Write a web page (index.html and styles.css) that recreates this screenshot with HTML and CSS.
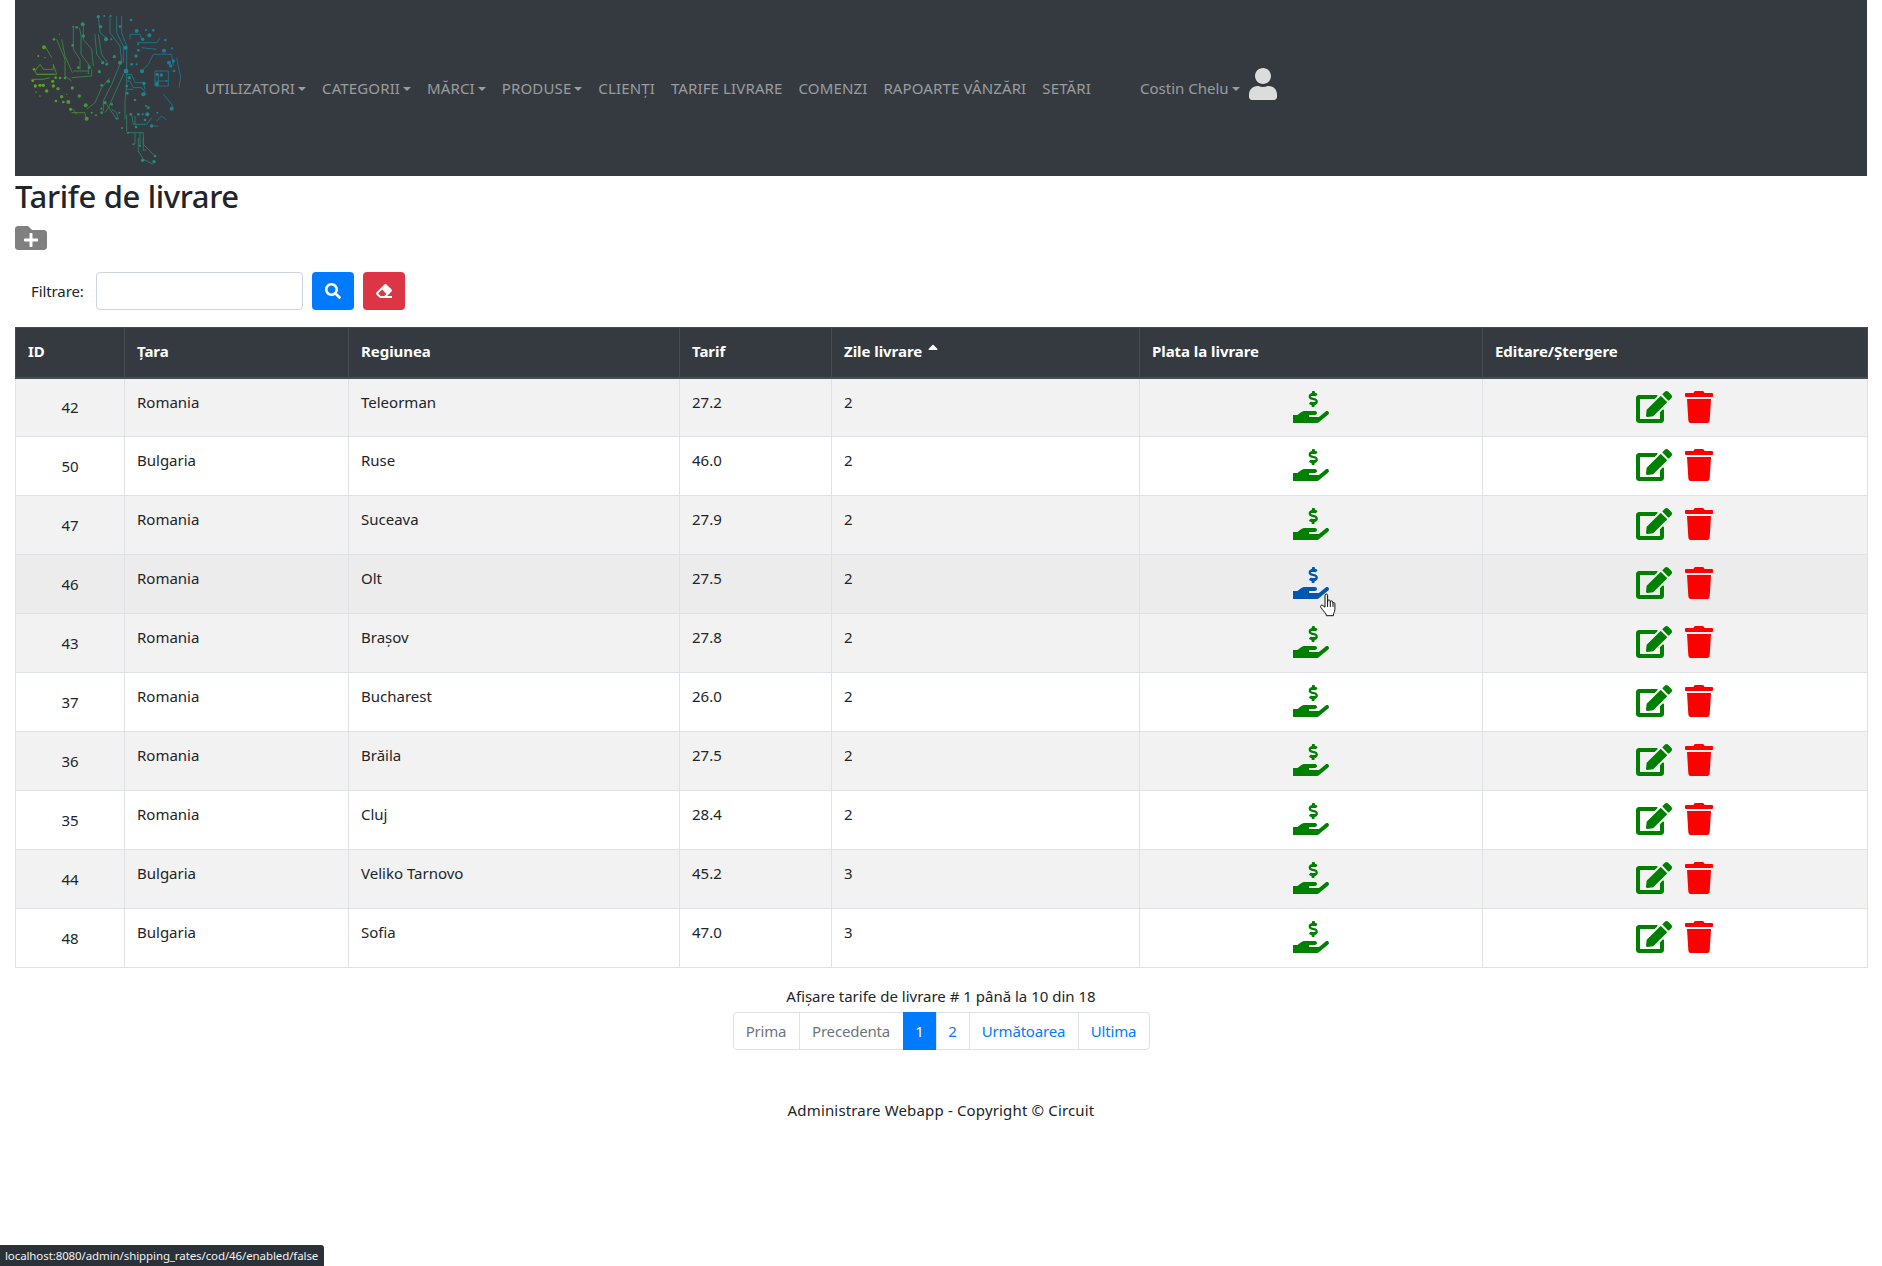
FILE: index.html
```html
<!DOCTYPE html>
<html lang="ro">
<head>
<meta charset="utf-8">
<title>Tarife de livrare</title>
<link rel="stylesheet" href="styles.css">
</head>
<body>
<svg class="defs" width="0" height="0" aria-hidden="true">
  <defs>
    <symbol id="i-cod" viewBox="0 0 576 512"><path d="M296 138l52 14c8 2 13 7 13 13 0 6-6 11-13 11h-34c-6 0-11-1-16-3-7-3-14-2-19 3l-18 17c-6 6-5 15 2 19 10 7 22 11 34 13v15c0 9 8 16 17 16h15c9 0 17-7 17-16v-16c31-4 55-31 51-62-3-22-22-40-45-46l-52-14c-8-2-13-7-13-13 0-6 6-11 13-11h34c6 0 11 1 16 3 7 3 14 2 19-3l18-17c6-6 5-15-2-19-10-7-22-11-34-13V16c0-9-8-16-17-16h-15c-9 0-17 7-17 16v16c-31 4-55 31-51 62 3 22 22 38 45 44z"/><path d="M565.3 328.1c-11.8-10.7-30.2-10-42.6 0L430.3 402c-11.3 9.1-25.4 14-40 14H272c-8.8 0-16-7.2-16-16s7.2-16 16-16h78.3c15.9 0 30.7-10.9 33.3-26.6 3.3-20-12.1-37.4-31.6-37.4H192c-27 0-53.1 9.3-74.1 26.3L71.4 384H0v128h372.8c14.5 0 28.6-4.9 40-14l151.2-121c15.2-12.2 16.4-34.8 1.3-48.9z"/></symbol>
    <symbol id="i-edit" viewBox="0 0 576 512"><path d="M402.6 83.2l90.2 90.2c3.8 3.8 3.8 10 0 13.8L274.4 405.6l-92.8 10.3c-12.4 1.4-22.9-9.1-21.5-21.5l10.3-92.8L388.8 83.2c3.8-3.8 10-3.8 13.8 0zm162-22.9l-48.8-48.8c-15.2-15.2-39.9-15.2-55.2 0l-35.4 35.4c-3.8 3.8-3.8 10 0 13.8l90.2 90.2c3.8 3.8 10 3.8 13.8 0l35.4-35.4c15.2-15.3 15.2-40 0-55.2zM384 346.2V448H64V128h229.8c3.2 0 6.2-1.3 8.5-3.5l40-40c7.6-7.6 2.2-20.5-8.5-20.5H48C21.5 64 0 85.5 0 112v352c0 26.5 21.5 48 48 48h352c26.5 0 48-21.5 48-48V306.2c0-10.7-12.9-16-20.5-8.5l-40 40c-2.2 2.3-3.5 5.3-3.5 8.5z"/></symbol>
    <symbol id="i-trash" viewBox="0 0 448 512"><path d="M432 32H312l-9.4-18.7A24 24 0 0 0 281.1 0H166.8a23.72 23.72 0 0 0-21.4 13.3L136 32H16A16 16 0 0 0 0 48v32a16 16 0 0 0 16 16h416a16 16 0 0 0 16-16V48a16 16 0 0 0-16-16zM53.2 467a48 48 0 0 0 47.9 45h245.8a48 48 0 0 0 47.9-45L416 128H32z"/></symbol>
  </defs>
</svg>

<div class="page">
  <nav class="navbar">
    <svg class="logo" viewBox="0 0 540 495" aria-label="logo">
      <defs>
        <linearGradient id="brain" gradientUnits="userSpaceOnUse" x1="40" y1="300" x2="480" y2="120">
          <stop offset="0" stop-color="#63ad0c"/>
          <stop offset=".35" stop-color="#3f9040"/>
          <stop offset=".6" stop-color="#1f8a86"/>
          <stop offset="1" stop-color="#1877a3"/>
        </linearGradient>
      </defs>
      <g class="traces">
        <path d="M160 60v70l20 30v30M178 65l5 20v60l30 40M190 60v40l25 30 5 50M110 100l25 60v50l20 15M125 100l10 50 22 50"/>
        <path d="M235 30l5 50 25 20M235 85l10 60 20 30M225 85l5 60 20 25M270 30v50l30 40 5 50M290 30v50l20 40v50M305 30v50l15 40"/>
        <path d="M45 195l15-20 10 15h30v-15l10 30H50zM50 205h55M40 220h30l20-5M75 120l20 35"/>
        <path d="M320 125v115l-5 40v60M315 195l-50 110-10 15M270 215l-25 30-20 45-25 20M300 175l-25 60-25 50v30"/>
        <path d="M320 205h15l10 25h25l5 20M320 225h10l10 20h25l15 20M320 250h20"/>
        <path d="M365 195l20-20 15-30h55l5 35M350 110h60l10-15M330 100v-15h30l5 15M365 125l45 5"/>
        <path d="M405 195h40v45h-40zM415 205v25M405 225h35M430 265l25 30 5 15M470 155l12 60-5 30"/>
        <path d="M155 320h40l5 25M160 310l10 15M275 310l15 10 5 20M260 295l30 45"/>
        <path d="M320 325v50M335 325l5 30h40l15-20M345 355v-25M395 360h20M410 345l15-15 15 12"/>
        <path d="M320 380h50v35l35 35M345 380v35M360 380v40M370 395v40M355 395v40l15 25 30 15"/>
        <path d="M155 215l60-5v-20M160 195h45M205 175v30"/>
      </g>
      <g class="dots">
        <circle cx="72" cy="124" r="6"/><circle cx="102" cy="100" r="4"/><circle cx="118" cy="85" r="2"/><circle cx="55" cy="150" r="3"/><circle cx="75" cy="155" r="2"/>
        <circle cx="42" cy="190" r="4"/><circle cx="38" cy="224" r="4"/><circle cx="46" cy="240" r="5"/><circle cx="60" cy="238" r="5"/><circle cx="70" cy="238" r="5"/><circle cx="80" cy="255" r="5"/><circle cx="60" cy="270" r="2"/><circle cx="48" cy="258" r="2"/>
        <circle cx="98" cy="226" r="5"/><circle cx="100" cy="240" r="5"/><circle cx="114" cy="248" r="5"/><circle cx="120" cy="216" r="4"/><circle cx="135" cy="216" r="4"/><circle cx="107" cy="215" r="4"/>
        <circle cx="125" cy="272" r="5"/><circle cx="108" cy="285" r="4"/><circle cx="130" cy="288" r="4"/><circle cx="145" cy="288" r="6"/><circle cx="157" cy="246" r="5"/><circle cx="178" cy="270" r="5"/><circle cx="140" cy="265" r="2"/>
        <circle cx="152" cy="310" r="5"/><circle cx="200" cy="338" r="6"/><circle cx="228" cy="328" r="3"/><circle cx="197" cy="298" r="6"/><circle cx="215" cy="320" r="3"/><circle cx="245" cy="320" r="4"/>
        <circle cx="255" cy="290" r="5"/><circle cx="244" cy="308" r="3"/><circle cx="275" cy="295" r="4"/><circle cx="298" cy="320" r="3"/><circle cx="290" cy="338" r="3"/><circle cx="306" cy="366" r="3"/>
        <circle cx="238" cy="197" r="5"/><circle cx="248" cy="170" r="5"/><circle cx="265" cy="226" r="5"/><circle cx="245" cy="238" r="4"/><circle cx="283" cy="152" r="5"/><circle cx="300" cy="170" r="6"/><circle cx="260" cy="175" r="4"/>
        <circle cx="160" cy="62" r="3"/><circle cx="170" cy="64" r="4"/><circle cx="188" cy="55" r="6"/><circle cx="190" cy="90" r="5"/><circle cx="158" cy="118" r="4"/><circle cx="175" cy="185" r="4"/><circle cx="208" cy="185" r="4"/>
        <circle cx="235" cy="32" r="5"/><circle cx="253" cy="30" r="3"/><circle cx="272" cy="30" r="3"/><circle cx="242" cy="62" r="5"/><circle cx="258" cy="100" r="6"/><circle cx="300" cy="62" r="4"/><circle cx="333" cy="42" r="4"/><circle cx="274" cy="100" r="3"/>
        <circle cx="350" cy="75" r="6"/><circle cx="378" cy="72" r="3"/><circle cx="400" cy="73" r="4"/><circle cx="388" cy="88" r="6"/><circle cx="368" cy="100" r="5"/><circle cx="436" cy="102" r="4"/><circle cx="317" cy="125" r="6"/><circle cx="355" cy="115" r="3"/><circle cx="355" cy="133" r="4"/><circle cx="348" cy="150" r="5"/><circle cx="432" cy="134" r="6"/><circle cx="456" cy="127" r="3"/>
        <circle cx="447" cy="170" r="6"/><circle cx="460" cy="165" r="5"/><circle cx="452" cy="180" r="5"/><circle cx="462" cy="195" r="4"/><circle cx="366" cy="196" r="6"/><circle cx="318" cy="195" r="7"/><circle cx="335" cy="175" r="4"/><circle cx="350" cy="175" r="3"/>
        <circle cx="412" cy="205" r="5"/><circle cx="424" cy="207" r="5"/><circle cx="411" cy="234" r="6"/><circle cx="440" cy="225" r="3"/><circle cx="372" cy="232" r="5"/><circle cx="370" cy="265" r="6"/><circle cx="328" cy="215" r="5"/><circle cx="320" cy="240" r="4"/><circle cx="322" cy="262" r="4"/>
        <circle cx="345" cy="282" r="4"/><circle cx="378" cy="300" r="3"/><circle cx="455" cy="308" r="6"/><circle cx="382" cy="325" r="6"/><circle cx="355" cy="325" r="4"/><circle cx="368" cy="325" r="3"/><circle cx="412" cy="320" r="3"/><circle cx="395" cy="360" r="5"/><circle cx="348" cy="363" r="4"/><circle cx="375" cy="342" r="4"/><circle cx="332" cy="325" r="4"/><circle cx="385" cy="305" r="4"/>
        <circle cx="324" cy="380" r="3"/><circle cx="340" cy="415" r="3"/><circle cx="360" cy="420" r="3"/><circle cx="368" cy="463" r="5"/><circle cx="402" cy="467" r="5"/><circle cx="405" cy="450" r="4"/><circle cx="375" cy="432" r="2"/>
      </g>
    </svg>
    <ul class="nav-list">
      <li><a class="nav-link caret" href="#">UTILIZATORI</a></li>
      <li><a class="nav-link caret" href="#">CATEGORII</a></li>
      <li><a class="nav-link caret" href="#">MĂRCI</a></li>
      <li><a class="nav-link caret" href="#">PRODUSE</a></li>
      <li><a class="nav-link" href="#">CLIENȚI</a></li>
      <li><a class="nav-link" href="#">TARIFE LIVRARE</a></li>
      <li><a class="nav-link" href="#">COMENZI</a></li>
      <li><a class="nav-link" href="#">RAPOARTE VÂNZĂRI</a></li>
      <li><a class="nav-link" href="#">SETĂRI</a></li>
    </ul>
    <div class="account">
      <a class="nav-link caret account-name" href="#">Costin Chelu</a>
      <svg class="user-icon" viewBox="0 0 448 512"><path d="M224 256c70.700 0 128-57.300 128-128S294.700 0 224 0 96 57.300 96 128s57.300 128 128 128zm89.600 32h-16.700c-22.200 10.200-46.900 16-72.900 16s-50.600-5.800-72.900-16h-16.700C60.200 288 0 348.200 0 422.400V464c0 26.500 21.500 48 48 48h352c26.500 0 48-21.500 48-48v-41.600c0-74.200-60.200-134.400-134.400-134.400z"/></svg>
    </div>
  </nav>

  <h2 class="title">Tarife de livrare</h2>
  <a class="add-link" href="#"><svg class="add-icon" viewBox="0 0 512 512"><path d="M464 128H272l-64-64H48C21.490 64 0 85.490 0 112v288c0 26.510 21.490 48 48 48h416c26.510 0 48-21.490 48-48V176c0-26.510-21.490-48-48-48zm-96 168c0 8.840-7.160 16-16 16h-72v72c0 8.840-7.160 16-16 16h-16c-8.840 0-16-7.160-16-16v-72h-72c-8.840 0-16-7.160-16-16v-16c0-8.840 7.160-16 16-16h72v-72c0-8.840 7.160-16 16-16h16c8.840 0 16 7.160 16 16v72h72c8.840 0 16 7.160 16 16v16z"/></svg></a>

  <form class="filter">
    <label class="filter-label" for="kw">Filtrare:</label>
    <input class="filter-input" id="kw" type="text">
    <button class="btn btn-blue" type="button"><svg class="btn-icon" viewBox="0 0 512 512"><path d="M505 442.700L405.300 343c-4.500-4.500-10.600-7-17-7H372c27.600-35.300 44-79.700 44-128C416 93.100 322.900 0 208 0S0 93.100 0 208s93.100 208 208 208c48.300 0 92.700-16.400 128-44v16.300c0 6.400 2.500 12.500 7 17l99.700 99.700c9.400 9.400 24.600 9.400 33.900 0l28.300-28.300c9.400-9.400 9.400-24.600.1-34zM208 336c-70.700 0-128-57.200-128-128 0-70.700 57.200-128 128-128 70.700 0 128 57.200 128 128 0 70.700-57.200 128-128 128z"/></svg></button>
    <button class="btn btn-red" type="button"><svg class="btn-icon" viewBox="0 0 512 512"><path d="M497.941 273.941c18.745-18.745 18.745-49.137 0-67.882l-160-160c-18.745-18.745-49.136-18.746-67.883 0l-256 256c-18.745 18.745-18.745 49.137 0 67.882l96 96A48.004 48.004 0 0 0 144 480h356c6.627 0 12-5.373 12-12v-40c0-6.627-5.373-12-12-12H355.883l142.058-142.059zm-302.627-62.627l137.373 137.373L265.373 416H150.628l-80-80 124.686-124.686z"/></svg></button>
  </form>

  <table class="rates">
    <colgroup>
      <col class="c-id"><col class="c-country"><col class="c-region"><col class="c-rate"><col class="c-days"><col class="c-cod"><col class="c-actions">
    </colgroup>
    <thead>
      <tr>
        <th>ID</th><th>Țara</th><th>Regiunea</th><th>Tarif</th>
        <th>Zile livrare <svg class="sort-up" viewBox="0 0 320 512"><path d="M279 224H41c-21.400 0-32.100-25.900-17-41L143 64c9.400-9.400 24.600-9.400 33.900 0l119 119c15.200 15.100 4.500 41-16.900 41z"/></svg></th>
        <th>Plata la livrare</th><th>Editare/Ștergere</th>
      </tr>
    </thead>
    <tbody>
      <tr><td class="id">42</td><td>Romania</td><td>Teleorman</td><td>27.2</td><td>2</td><td class="center"><svg class="ico cod"><use href="#i-cod"/></svg></td><td class="center actions"><svg class="ico edit"><use href="#i-edit"/></svg><svg class="ico trash"><use href="#i-trash"/></svg></td></tr>
      <tr><td class="id">50</td><td>Bulgaria</td><td>Ruse</td><td>46.0</td><td>2</td><td class="center"><svg class="ico cod"><use href="#i-cod"/></svg></td><td class="center actions"><svg class="ico edit"><use href="#i-edit"/></svg><svg class="ico trash"><use href="#i-trash"/></svg></td></tr>
      <tr><td class="id">47</td><td>Romania</td><td>Suceava</td><td>27.9</td><td>2</td><td class="center"><svg class="ico cod"><use href="#i-cod"/></svg></td><td class="center actions"><svg class="ico edit"><use href="#i-edit"/></svg><svg class="ico trash"><use href="#i-trash"/></svg></td></tr>
      <tr class="hover"><td class="id">46</td><td>Romania</td><td>Olt</td><td>27.5</td><td>2</td><td class="center"><span class="cursor-anchor"><svg class="ico cod active"><use href="#i-cod"/></svg><svg class="hand-cursor" viewBox="0 0 18 24"><path d="M6 2.200c0-1.600 2.600-1.600 2.600 0v7l.1-1.400c.3-1.300 2.400-1.200 2.500.3l.1 1.500.1-.9c.3-1.200 2.200-1 2.300.4l.1 1.100c.2-1 2-.9 2.100.5v5.600c0 1.600-.6 3-1.300 4.200l-.2 2.200H7.400l-.4-1.700C5.800 19.600 3.800 17 1.800 14.400c-1-1.400.7-3 2.100-1.900L6 14.200z"/><path class="cursor-lines" d="M8.600 9v5M11.300 9.500V14M14 10v4"/></svg></span></td><td class="center actions"><svg class="ico edit"><use href="#i-edit"/></svg><svg class="ico trash"><use href="#i-trash"/></svg></td></tr>
      <tr><td class="id">43</td><td>Romania</td><td>Brașov</td><td>27.8</td><td>2</td><td class="center"><svg class="ico cod"><use href="#i-cod"/></svg></td><td class="center actions"><svg class="ico edit"><use href="#i-edit"/></svg><svg class="ico trash"><use href="#i-trash"/></svg></td></tr>
      <tr><td class="id">37</td><td>Romania</td><td>Bucharest</td><td>26.0</td><td>2</td><td class="center"><svg class="ico cod"><use href="#i-cod"/></svg></td><td class="center actions"><svg class="ico edit"><use href="#i-edit"/></svg><svg class="ico trash"><use href="#i-trash"/></svg></td></tr>
      <tr><td class="id">36</td><td>Romania</td><td>Brăila</td><td>27.5</td><td>2</td><td class="center"><svg class="ico cod"><use href="#i-cod"/></svg></td><td class="center actions"><svg class="ico edit"><use href="#i-edit"/></svg><svg class="ico trash"><use href="#i-trash"/></svg></td></tr>
      <tr><td class="id">35</td><td>Romania</td><td>Cluj</td><td>28.4</td><td>2</td><td class="center"><svg class="ico cod"><use href="#i-cod"/></svg></td><td class="center actions"><svg class="ico edit"><use href="#i-edit"/></svg><svg class="ico trash"><use href="#i-trash"/></svg></td></tr>
      <tr><td class="id">44</td><td>Bulgaria</td><td>Veliko Tarnovo</td><td>45.2</td><td>3</td><td class="center"><svg class="ico cod"><use href="#i-cod"/></svg></td><td class="center actions"><svg class="ico edit"><use href="#i-edit"/></svg><svg class="ico trash"><use href="#i-trash"/></svg></td></tr>
      <tr><td class="id">48</td><td>Bulgaria</td><td>Sofia</td><td>47.0</td><td>3</td><td class="center"><svg class="ico cod"><use href="#i-cod"/></svg></td><td class="center actions"><svg class="ico edit"><use href="#i-edit"/></svg><svg class="ico trash"><use href="#i-trash"/></svg></td></tr>
    </tbody>
  </table>

  <div class="summary">Afișare tarife de livrare # 1 până la 10 din 18</div>
  <ul class="pagination">
    <li class="page-item w-prima disabled">Prima</li>
    <li class="page-item w-prev disabled">Precedenta</li>
    <li class="page-item w-num current">1</li>
    <li class="page-item w-num">2</li>
    <li class="page-item w-next">Următoarea</li>
    <li class="page-item w-last">Ultima</li>
  </ul>
  <footer class="footer">Administrare Webapp - Copyright © Circuit</footer>
</div>
<div class="status-bar">localhost:8080/admin/shipping_rates/cod/46/enabled/false</div>
</body>
</html>
```
FILE: styles.css
```css
* { box-sizing: border-box; }
html, body { margin: 0; padding: 0; }
body {
  font-family: "Noto Sans", "Open Sans", sans-serif;
  font-size: 15px;
  line-height: 24px;
  color: #212529;
  background: #fff;
  height: 1266px;
  overflow: hidden;
}
.defs { display: block; height: 0; }
.page { padding: 0 15px; }

.navbar {
  display: flex;
  align-items: center;
  height: 176px;
  background: #343a40;
  padding-left: 5px;
}
.logo { width: 180px; height: 165px; flex: none; }
.traces { fill: none; stroke: url(#brain); stroke-width: 2.5; opacity: .9; }
.dots { fill: url(#brain); }
.nav-list {
  list-style: none;
  display: flex;
  margin: 0 0 0 5px;
  padding: 0;
  gap: 16px;
}
.nav-link {
  color: rgba(255,255,255,.5);
  text-decoration: none;
  font-size: 15px;
  letter-spacing: .13px;
  white-space: nowrap;
}
.caret::after {
  content: "";
  display: inline-block;
  margin-left: 3px;
  vertical-align: 3px;
  border-top: 4px solid;
  border-left: 4px solid transparent;
  border-right: 4px solid transparent;
}
.account { display: flex; align-items: center; margin-left: 49px; }
.account-name { letter-spacing: 0; }
.user-icon { width: 28px; height: 32px; fill: #dcdcdc; margin: -8px 0 0 9px; }

.title {
  margin: -1px 0 0;
  font-size: 31px;
  line-height: 42px;
  font-weight: 500;
  letter-spacing: -.35px;
}
.add-link { display: block; height: 38px; }
.add-icon { display: block; width: 32px; height: 32px; fill: #808080; margin-top: 5px; }

.filter { display: flex; align-items: center; height: 38px; padding-left: 16px; margin-top: 12px; }
.filter-label { font-size: 15px; width: 65px; letter-spacing: -.1px; }
.filter-input {
  width: 207px; height: 38px;
  border: 1px solid #ced4da; border-radius: 4px;
  margin-right: 9px;
}
.btn {
  width: 42px; height: 38px; border: 0; border-radius: 4px;
  display: flex; align-items: center; justify-content: center;
  margin-right: 9px; padding: 0;
}
.btn-blue { background: #007bff; }
.btn-red { background: #dc3545; }
.btn-icon { width: 16px; height: 16px; fill: #fff; }

.rates {
  width: 1852px;
  margin-top: 17px;
  border-collapse: collapse;
  table-layout: fixed;
}
.c-id { width: 109px; }
.c-country { width: 224px; }
.c-region { width: 331px; }
.c-rate { width: 152px; }
.c-days { width: 308px; }
.c-cod { width: 343px; }
.c-actions { width: 385px; }
.rates th, .rates td { padding: 11px 12px 13px; border: 1px solid #dee2e6; vertical-align: top; text-align: left; }
.rates th {
  background: #343a40; color: #fff; border-color: #454d55;
  border-bottom-width: 2px; font-size: 15px; font-weight: 700; letter-spacing: -.05px; height: 50px;
  vertical-align: middle;
  padding: 11px 12px 13px;
}
.rates td { height: 59px; font-size: 15px; }
.rates tbody tr:nth-child(odd) { background: #f2f2f2; }
.rates tbody tr.hover { background: #ececec; }
.rates td.id { vertical-align: middle; text-align: center; padding: 12px; }
.rates td.center { text-align: center; padding: 12px 12px 0; font-size: 0; }
.rates td.actions { padding-right: 14px; }
.sort-up { width: 10px; height: 16px; fill: #fff; vertical-align: -2px; margin-left: 2px; }

.ico { display: inline-block; height: 32px; vertical-align: top; }
.cod { width: 36px; fill: #008000; }
.cod.active { fill: #0056b3; }
.edit { width: 36px; fill: #008000; margin-right: 13px; }
.trash { width: 28px; fill: #f00; }
.cursor-anchor { position: relative; display: inline-block; }
.hand-cursor { position: absolute; left: 26px; top: 26px; width: 18px; height: 24px; fill: #fff; stroke: #111; stroke-width: 1; }
.cursor-lines { fill: none; }

.summary { text-align: center; margin-top: 16px; font-size: 15px; }
.pagination {
  list-style: none; display: flex; justify-content: center; margin: 4px 0 0; padding: 0;
}
.page-item {
  height: 38px; line-height: 36px; text-align: center;
  border: 1px solid #dee2e6; margin-left: -1px; color: #007bff; font-size: 15px; letter-spacing: -.2px;
}
.page-item:first-child { border-radius: 4px 0 0 4px; margin-left: 0; }
.page-item:last-child { border-radius: 0 4px 4px 0; }
.w-prima { width: 67px; }
.w-prev { width: 105px; }
.w-num { width: 34px; }
.w-next { width: 110px; }
.w-last { width: 72px; }
.disabled { color: #6c757d; }
.current { background: #007bff; border-color: #007bff; color: #fff; }
.footer { text-align: center; margin-top: 48px; font-size: 15px; letter-spacing: .16px; }

.status-bar {
  position: fixed; left: 0; bottom: 0;
  height: 21px; width: 324px; padding: 0 5px;
  background: #2a3138; color: #f2f2f2;
  font-size: 11.5px; line-height: 21px; letter-spacing: -.1px;
  border-top-right-radius: 3px; white-space: nowrap; overflow: hidden;
}
```
